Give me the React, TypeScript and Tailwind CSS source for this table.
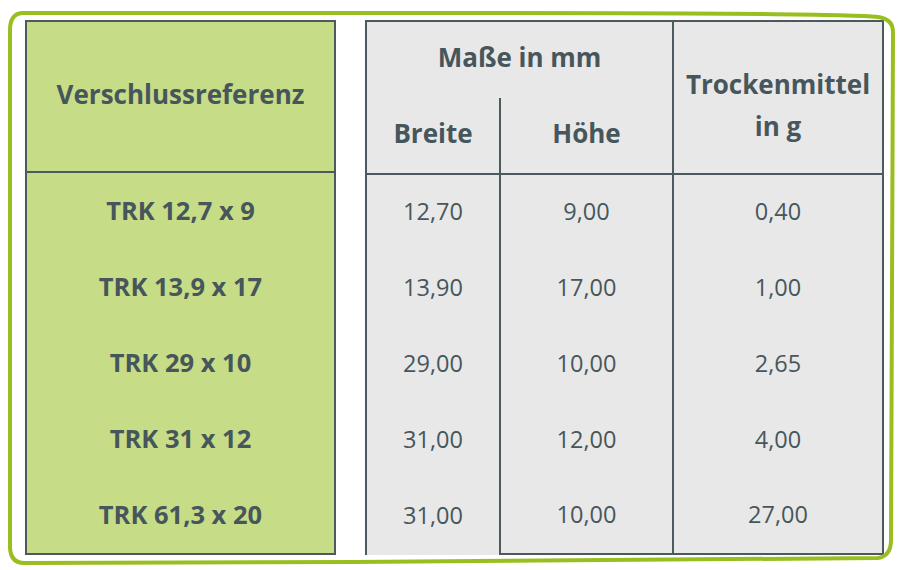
const rows = [
  { ref: "TRK 12,7 x 9", b: "12,70", h: "9,00", t: "0,40" },
  { ref: "TRK 13,9 x 17", b: "13,90", h: "17,00", t: "1,00" },
  { ref: "TRK 29 x 10", b: "29,00", h: "10,00", t: "2,65" },
  { ref: "TRK 31 x 12", b: "31,00", h: "12,00", t: "4,00" },
  { ref: "TRK 61,3 x 20", b: "31,00", h: "10,00", t: "27,00" },
]

function Frame() {
  // hand drawn green outline around the tables
  return (
    <svg className="absolute inset-0 pointer-events-none" width="902" height="570" viewBox="0 0 902 570">
      <path
        d="M 22 13 C 80 12, 300 13, 500 13 S 850 14, 878 17 Q 893 19, 893 32 L 891 540 Q 891 556, 878 558 C 700 560, 300 563, 24 563 Q 11 563, 10 548 L 10 30 Q 10 14, 22 13 Z"
        fill="none"
        stroke="#98bf1f"
        strokeWidth="4"
        strokeLinejoin="round"
      />
    </svg>
  )
}

export default function App() {
  return (
    <div
      className="relative w-[902px] h-[570px] bg-white text-[#47565b]"
      style={{ fontFamily: "'Open Sans', 'Noto Sans', sans-serif" }}
    >
      <Frame />
      <div className="flex gap-[29px] pt-[20px] pl-[25px]">
        {/* left column */}
        <div className="w-[311px] h-[535px] border-2 border-[#4b5a5f] bg-[#c6dc87] flex flex-col">
          <div className="h-[151px] shrink-0 flex items-center justify-center border-b-2 border-[#4b5a5f] text-[26px] font-bold pb-[4px]">
            Verschlussreferenz
          </div>
          {rows.map((r) => (
            <div key={r.ref} className="flex-1 flex items-center justify-center text-[25.5px] font-bold pb-[2px]">
              {r.ref}
            </div>
          ))}
        </div>

        {/* right table */}
        <div className="w-[519px] h-[535px] border-t-2 border-x-2 border-[#4b5a5f] bg-[#e8e8e8] flex flex-col">
          <div className="h-[153px] shrink-0 flex border-b-2 border-[#4b5a5f]">
            <div className="w-[307px] border-r-2 border-[#4b5a5f] flex flex-col">
              <div className="h-[76px] flex items-center justify-center text-[26px] font-bold pb-[6px]">Maße in mm</div>
              <div className="flex-1 flex">
                <div className="w-[134px] border-r-2 border-[#4b5a5f] flex items-center justify-center text-[26px] font-bold pb-[4px]">
                  Breite
                </div>
                <div className="flex-1 flex items-center justify-center text-[26px] font-bold pb-[4px]">Höhe</div>
              </div>
            </div>
            <div className="flex-1 flex flex-col items-center justify-center pt-[14px] text-[26px] font-bold leading-[42px]">
              <span>Trockenmittel</span>
              <span>in g</span>
            </div>
          </div>
          {rows.map((r, i) => (
            <div key={r.ref} className="flex-1 flex text-[23.5px]">
              <div className="w-[134px] border-r-2 border-[#4b5a5f] flex items-center justify-center pb-[2px]">{r.b}</div>
              <div
                className={`w-[173px] border-r-2 border-[#4b5a5f] flex items-center justify-center pb-[2px] ${
                  i === rows.length - 1 ? "border-b-2" : ""
                }`}
              >
                {r.h}
              </div>
              <div
                className={`flex-1 flex items-center justify-center pb-[2px] ${
                  i === rows.length - 1 ? "border-b-2 border-[#4b5a5f]" : ""
                }`}
              >
                {r.t}
              </div>
            </div>
          ))}
        </div>
      </div>
    </div>
  )
}
